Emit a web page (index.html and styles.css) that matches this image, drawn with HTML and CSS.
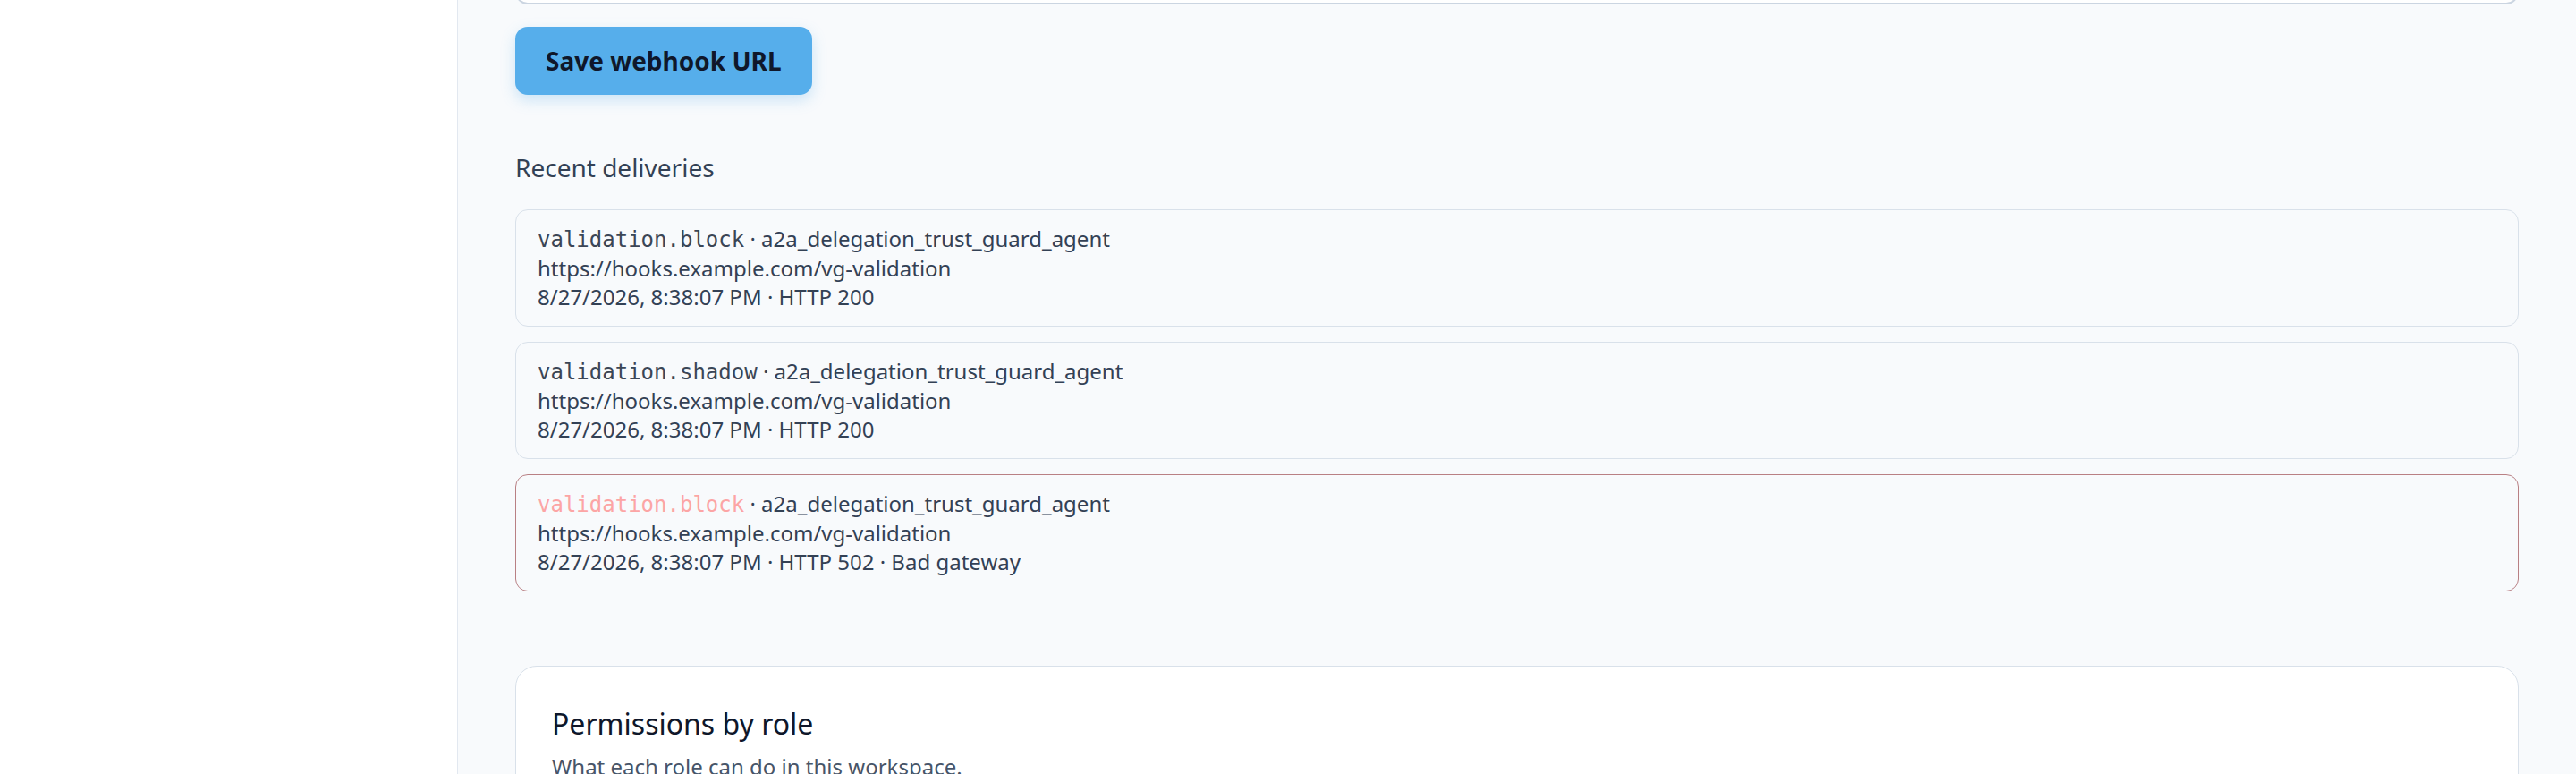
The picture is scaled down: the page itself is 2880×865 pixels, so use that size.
FILE: index.html
```html
<!DOCTYPE html>
<html lang="en">
<head>
<meta charset="utf-8">
<title>Webhooks</title>
<link rel="stylesheet" href="styles.css">
</head>
<body>
<div class="layout">
  <aside class="sidebar"></aside>
  <main class="main">
    <div class="url-input"></div>
    <button class="btn-primary" type="button">Save webhook URL</button>

    <h3 class="section-label">Recent deliveries</h3>
    <ul class="deliveries">
      <li class="delivery">
        <div class="delivery-head"><code class="event">validation.block</code> · a2a_delegation_trust_guard_agent</div>
        <div>https://hooks.example.com/vg-validation</div>
        <div>8/27/2026, 8:38:07 PM · HTTP 200</div>
      </li>
      <li class="delivery">
        <div class="delivery-head"><code class="event">validation.shadow</code> · a2a_delegation_trust_guard_agent</div>
        <div>https://hooks.example.com/vg-validation</div>
        <div>8/27/2026, 8:38:07 PM · HTTP 200</div>
      </li>
      <li class="delivery delivery-failed">
        <div class="delivery-head"><code class="event">validation.block</code> · a2a_delegation_trust_guard_agent</div>
        <div>https://hooks.example.com/vg-validation</div>
        <div>8/27/2026, 8:38:07 PM · HTTP 502 · Bad gateway</div>
      </li>
    </ul>

    <section class="panel">
      <h2 class="panel-title">Permissions by role</h2>
      <p class="panel-sub">What each role can do in this workspace.</p>
    </section>
  </main>
</div>
</body>
</html>
```
FILE: styles.css
```css
* { box-sizing: border-box; }

html, body {
  margin: 0;
  padding: 0;
  height: 865px;
  overflow: hidden;
  background: #f8fafc;
  font-family: "Noto Sans", "Open Sans", sans-serif;
  color: #334155;
}

.layout {
  display: flex;
  min-height: 865px;
}

.sidebar {
  flex: 0 0 512px;
  background: #ffffff;
  border-right: 1px solid #e2e8f0;
}

.main {
  flex: 1;
  padding: 0 64px;
  display: flex;
  flex-direction: column;
  align-items: stretch;
}

.url-input {
  height: 64px;
  margin-top: -59px;
  background: #ffffff;
  border: 2px solid #cbd5e1;
  border-radius: 14px;
}

.btn-primary {
  align-self: flex-start;
  margin-top: 25px;
  padding: 17px 34px;
  font-family: inherit;
  font-size: 28px;
  line-height: 42px;
  font-weight: 700;
  color: #0f172a;
  background: #56aeeb;
  border: none;
  border-radius: 14px;
  box-shadow: 0 6px 16px rgba(86, 174, 235, 0.28);
}

.section-label {
  margin: 60px 0 0;
  font-size: 28px;
  line-height: 42px;
  font-weight: 400;
  color: #334155;
}

.deliveries {
  list-style: none;
  margin: 26px 0 0;
  padding: 0;
  display: flex;
  flex-direction: column;
  gap: 17px;
}

.delivery {
  padding: 16px 24px;
  font-size: 24px;
  line-height: 32px;
  color: #334155;
  background: #f8fafc;
  border: 1px solid #d9e1ea;
  border-radius: 14px;
}

.event {
  font-family: "DejaVu Sans Mono", "Liberation Mono", monospace;
  font-size: 24px;
  color: #3b4656;
}

.delivery-failed {
  border-color: #b98084;
}

.delivery-failed .event {
  color: #fca5a5;
}

.panel {
  margin-top: 83px;
  padding: 40px;
  background: #ffffff;
  border: 1px solid #d9e1ea;
  border-radius: 24px;
  min-height: 300px;
}

.panel-title {
  margin: 0;
  font-size: 32px;
  line-height: 48px;
  font-weight: 400;
  color: #0f172a;
}

.panel-sub {
  margin: 8px 0 0;
  font-size: 24px;
  line-height: 32px;
  color: #475569;
}
```
